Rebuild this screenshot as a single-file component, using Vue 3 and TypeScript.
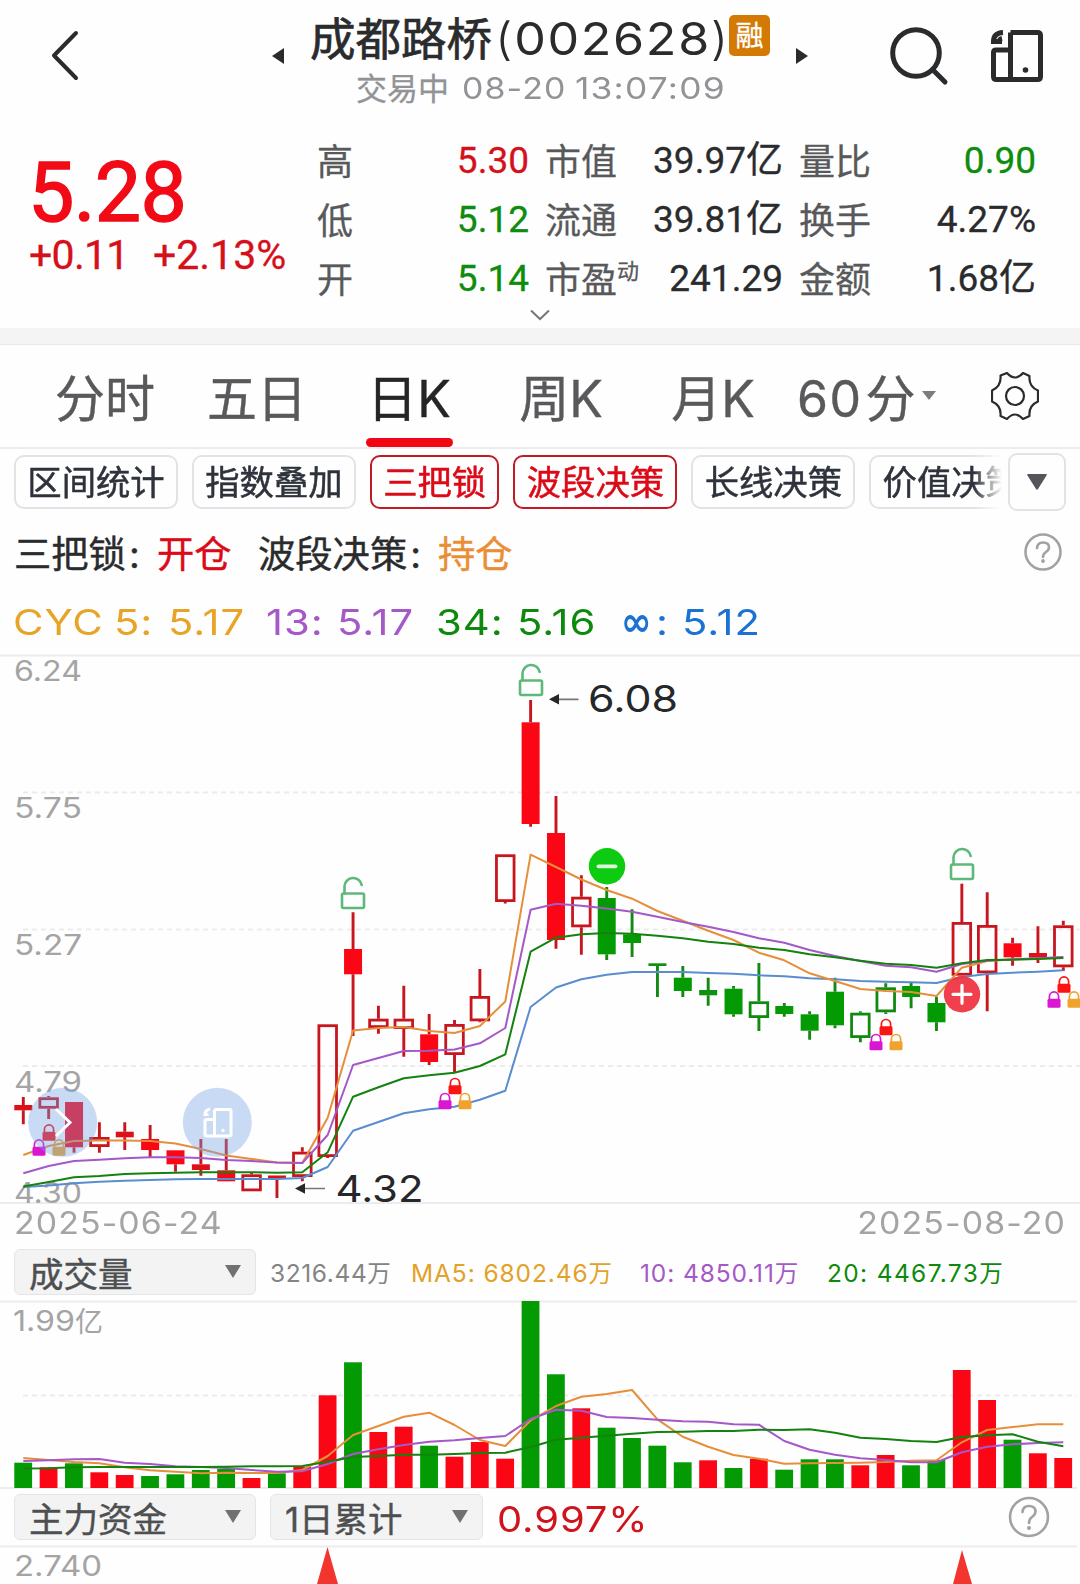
<script setup lang="ts">
interface Candle {
  x: number
  up: boolean
  hollow: boolean
  high: number
  top: number
  bottom: number
  low: number
}
interface Line {
  color: string
  points: string
}

const RED = '#fa0615'
const GREEN = '#039a03'
const DARK_RED = '#c8161e'

const xAt = (i: number): number => 23.3 + 25.366 * i

// colour + style code, high, body top, body bottom, low
const rawCandles: [string, number, number, number, number][] = [
  ['rf', 1097, 1105, 1110.3, 1124.3],
  ['rh', 1096, 1097.3, 1108.7, 1119],
  ['rf', 1102, 1102, 1147.3, 1152.7],
  ['rh', 1122.3, 1137, 1147, 1152.7],
  ['rf', 1122.3, 1131.7, 1137.3, 1150],
  ['rf', 1125, 1139, 1150, 1157],
  ['rf', 1150.3, 1150.3, 1164.3, 1171.7],
  ['rf', 1139, 1164.3, 1170, 1175.7],
  ['rf', 1139, 1170.3, 1181.3, 1181.3],
  ['rh', 1172.7, 1174.3, 1191.3, 1191.3],
  ['rf', 1175.5, 1175.5, 1178, 1198],
  ['rh', 1147.3, 1151.7, 1177, 1181.3],
  ['rh', 1024.3, 1024.3, 1157, 1158],
  ['rf', 912.3, 949, 974.3, 1036],
  ['rh', 1005.7, 1018.7, 1028, 1033.7],
  ['rh', 985.7, 1018.7, 1029, 1056.7],
  ['rf', 1014, 1034.3, 1062, 1065],
  ['rh', 1020, 1024, 1055, 1072.7],
  ['rh', 969, 996, 1021.3, 1022.3],
  ['rh', 854.3, 854.3, 902, 903.5],
  ['rf', 700, 722.3, 824, 826.7],
  ['rf', 796, 833, 940, 948.7],
  ['rh', 875.3, 896.7, 927.3, 954.7],
  ['gf', 887, 898, 954.3, 960],
  ['gf', 909.3, 934.3, 943, 957],
  ['gf', 963.3, 963.3, 966, 997],
  ['gf', 966, 977.7, 991, 997],
  ['gf', 977.7, 990, 995.3, 1005.7],
  ['gf', 986, 988.7, 1014.3, 1016.7],
  ['gh', 963, 1001.3, 1018, 1031],
  ['gf', 1003, 1006, 1014, 1016.7],
  ['gf', 1011.3, 1014.3, 1030.7, 1039.7],
  ['gf', 977.7, 991.7, 1025.3, 1028.3],
  ['gh', 1011.3, 1012.7, 1038, 1042.3],
  ['gh', 983.3, 987.3, 1012.3, 1014],
  ['gf', 983, 986, 997, 1008.3],
  ['gf', 996.7, 1003, 1022.3, 1031],
  ['rh', 883.7, 922, 975.7, 975.7],
  ['rh', 892.3, 925, 973.3, 1011.3],
  ['rf', 937.7, 943.3, 957.3, 965.7],
  ['rf', 926.3, 953, 957.7, 963],
  ['rh', 920.7, 925.3, 967.3, 971],
]
const candles: Candle[] = rawCandles.map(([code, high, top, bottom, low], i) => ({
  x: xAt(i), up: code[0] === 'r', hollow: code[1] === 'h', high, top, bottom, low,
}))

const toLine = (color: string, ys: number[]): Line => ({
  color,
  points: ys.map((y, i) => `${xAt(i).toFixed(1)},${y}`).join(' '),
})

const priceLines: Line[] = [
  toLine('#5a8dcf', [1187, 1185.5, 1183.3, 1181.7, 1180.7, 1180, 1179.3, 1179, 1179, 1179, 1179, 1178, 1167, 1130.7, 1122, 1113.3, 1109.3, 1106.7, 1099.7, 1090.7, 1007, 987.5, 979.3, 974.7, 972, 972, 972, 973, 973.7, 975.3, 976.3, 978.3, 979.3, 981, 981.7, 982.3, 983, 977, 974, 972.7, 971.7, 970.3]),
  toLine('#e68f3a', [1155, 1146, 1141, 1140.5, 1140.5, 1141, 1143.5, 1149, 1155.5, 1159, 1162.5, 1163, 1117.7, 1030.5, 1028, 1027, 1031, 1033, 1026, 1001.5, 854.7, 867, 879.5, 890, 898.7, 911, 920.7, 930.7, 940, 952.7, 960.3, 973.3, 981, 989, 991, 992, 996, 967.7, 961, 959.5, 958.7, 957]),
  toLine('#a558c8', [1173.3, 1166, 1161, 1159.7, 1158.3, 1157.3, 1157.3, 1158, 1160, 1161, 1162.5, 1163, 1135, 1065, 1058, 1051, 1050.7, 1049.5, 1043.3, 1028, 909.7, 903.7, 905.7, 908.5, 911.7, 916.7, 922, 926.7, 932, 938.3, 942.7, 950, 956, 961, 965.7, 967.3, 971.7, 964, 960.7, 959.3, 958.3, 957]),
  toLine('#14820f', [1186.5, 1182, 1177.3, 1176, 1174, 1173.3, 1172.7, 1172.3, 1172.3, 1172.3, 1172.7, 1172.3, 1152.3, 1096.7, 1087.3, 1078.3, 1075.3, 1072.7, 1066, 1054.3, 951.7, 937.7, 934.3, 933, 933.7, 935.7, 938.3, 941.7, 944, 947.7, 950, 954.3, 957.3, 960.7, 963.7, 965, 967.7, 963.3, 960, 959.7, 959, 958]),
]

const VOLUME_BASE = 1488
const volumeColors = 'grgrrggggrgrrgrrgrrrggrggggrgrggg' + 'rrggrrgrr'
const volumeTops = [1462.7, 1467.3, 1463.3, 1472.3, 1475, 1476, 1474.3, 1470, 1469, 1478, 1473.3, 1466.7, 1395.3, 1362.3, 1432, 1426.7, 1445.7, 1456.7, 1442, 1458.7, 1301, 1374.3, 1408.3, 1427.7, 1438, 1445.7, 1462.3, 1460.3, 1468, 1458.7, 1469.7, 1459.3, 1459.3, 1465.3, 1455, 1465.3, 1460, 1370, 1400, 1439.7, 1453.3, 1458]
const bars = volumeTops.map((top, i) => ({
  x: xAt(i), top, color: volumeColors[i] === 'r' ? RED : GREEN,
}))

const volumeLines: Line[] = [
  toLine('#e68f3a', [1458, 1460, 1462, 1463.3, 1467.3, 1470.3, 1471.7, 1473.3, 1472.7, 1473, 1473, 1470, 1456, 1435, 1426, 1416.7, 1412.7, 1425, 1440, 1446, 1420.5, 1406, 1396.7, 1394, 1390, 1419.3, 1436.7, 1446.7, 1455, 1458.7, 1463.7, 1463.3, 1463, 1462.7, 1462, 1460.7, 1460.3, 1442.3, 1430, 1427, 1424.3, 1424.3]),
  toLine('#a558c8', [1461, 1460.3, 1459.3, 1459, 1462.7, 1464, 1466.3, 1467, 1468, 1470, 1471.7, 1471.3, 1464, 1454, 1449.3, 1445, 1441.7, 1440.3, 1438, 1436, 1419, 1409.7, 1410.7, 1417, 1418, 1419.7, 1421.3, 1421.7, 1424.3, 1424.7, 1441, 1449.7, 1454.7, 1458.3, 1460, 1462.3, 1462.3, 1452.3, 1446.7, 1444.3, 1443, 1442.3]),
  toLine('#14820f', [1468.5, 1468.3, 1467.3, 1467, 1467, 1467, 1467, 1467, 1466.7, 1466.3, 1466.3, 1466, 1461.7, 1457, 1456, 1454.7, 1454.7, 1454, 1453, 1452.7, 1447, 1439.7, 1437.7, 1435.7, 1433.7, 1432, 1431.7, 1431, 1431, 1429.7, 1430, 1429.3, 1432.7, 1437.7, 1439, 1441, 1442, 1437, 1435.3, 1434.3, 1441.7, 1446.3]),
]

const axisLabels = [
  { text: '6.24', y: 681 },
  { text: '5.75', y: 817.5 },
  { text: '5.27', y: 954.5 },
  { text: '4.79', y: 1091.5 },
  { text: '4.30', y: 1203 },
]
const openLocks = [
  { x: 353, y: 908 },
  { x: 531, y: 695 },
  { x: 962, y: 879 },
]
const lockGroups = [
  { x: 49, y: 1140.7 },
  { x: 455, y: 1094.3 },
  { x: 886, y: 1035.3 },
  { x: 1064, y: 992.7 },
]
const lockParts = [
  { dx: 0, dy: 0, color: '#fb1414' },
  { dx: -10, dy: 15, color: '#d916d2' },
  { dx: 10, dy: 15, color: '#f0a32c' },
]

const stats = [
  { label: '高', value: '5.30', tone: 'red' },
  { label: '市值', value: '39.97', unit: '亿' },
  { label: '量比', value: '0.90', tone: 'green' },
  { label: '低', value: '5.12', tone: 'green' },
  { label: '流通', value: '39.81', unit: '亿' },
  { label: '换手', value: '4.27%' },
  { label: '开', value: '5.14', tone: 'green' },
  { label: '市盈', sup: '动', value: '241.29' },
  { label: '金额', value: '1.68', unit: '亿' },
]
const tabs = ['分时', '五日', '日K', '周K', '月K']
const chips = [
  { text: '区间统计', on: false },
  { text: '指数叠加', on: false },
  { text: '三把锁', on: true },
  { text: '波段决策', on: true },
  { text: '长线决策', on: false },
  { text: '价值决策', on: false },
]
</script>

<template>
  <main class="app">
    <header class="top">
      <svg class="back" width="30" height="52" viewBox="0 0 30 52"><path d="M26 4L4 26.5L26 49" /></svg>
      <svg class="prev" width="12" height="16" viewBox="0 0 12 16"><path d="M12 0V16L0 8Z" /></svg>
      <div class="heading">
        <h1><span class="name">成都路桥</span><span class="code"><i>(</i>002628<i class="close">)</i></span><span class="badge">融</span></h1>
        <p class="time"><span class="state">交易中</span><span class="day">08-20</span><span class="clock">13:07:09</span></p>
      </div>
      <svg class="next" width="12" height="16" viewBox="0 0 12 16"><path d="M0 0V16L12 8Z" /></svg>
      <svg class="search" width="60" height="60" viewBox="0 0 60 60">
        <circle cx="27" cy="27" r="23.3" /><path d="M43.500 43.500L56 56" />
      </svg>
      <svg class="device" width="52" height="52" viewBox="0 0 52 52">
        <path d="M19.500 2.500H46.500Q49.500 2.500 49.500 5.500V46.500Q49.500 49.500 46.500 49.500H5.500Q2.500 49.500 2.500 46.500V22.500Q2.500 20 5 20H19.500M19.500 2.500V49.500" />
        <path d="M12 2.500Q2.500 3 2.500 11.500H8.500Q8.500 9 11 8.500" /><circle cx="34.500" cy="40" r="2.800" />
      </svg>
    </header>

    <section class="quote">
      <div class="price">
        <strong>5.28</strong>
        <div class="change"><span class="diff">+0.11</span><span>+2.13%</span></div>
      </div>
      <div class="stats">
        <div v-for="s in stats" :key="s.label" class="stat">
          <span class="label">{{ s.label }}<sup v-if="s.sup">{{ s.sup }}</sup></span>
          <span class="value" :class="s.tone">{{ s.value }}<b v-if="s.unit">{{ s.unit }}</b></span>
        </div>
      </div>
      <svg class="expand" width="22" height="12" viewBox="0 0 22 12"><path d="M2 1.500L11 10L20 1.500" /></svg>
    </section>

    <nav class="tabs">
      <span v-for="t in tabs" :key="t" class="tab" :class="{ current: t === '日K' }">{{ t }}</span>
      <span class="tab minutes"><em>60</em><span>分</span><svg width="14" height="9" viewBox="0 0 14 9"><path d="M0 0H14L7 9Z" /></svg></span>
      <svg class="gear" width="48" height="48" viewBox="-24 -24 48 48">
        <path d="M-14.500 -20.500L-8 -23Q-4 -18.500 0 -18.500Q4 -18.500 8 -23L14.500 -20Q13.500 -9.500 23 -5.500V5.500Q13.500 9.500 14.500 20L8 23Q4 18.500 0 18.500Q-4 18.500 -8 23L-14.500 20Q-13.500 9.500 -23 5.500V-5.500Q-13.500 -9.500 -14.500 -20.500Z" />
        <circle r="9" />
      </svg>
    </nav>

    <section class="chips">
      <div class="chip-scroll">
        <span v-for="c in chips" :key="c.text" class="chip" :class="{ on: c.on }">{{ c.text }}</span>
      </div>
      <button class="more"><svg width="20" height="16" viewBox="0 0 20 16"><path d="M1 0H19Q20.500 0 19.500 1.500L11 15Q10 16.500 9 15L0.500 1.500Q-0.500 0 1 0Z" /></svg></button>
    </section>

    <section class="signals">
      <span class="sig-a">三把锁<i>:</i></span><span class="open">开仓</span>
      <span class="sig-b">波段决策<i>:</i></span><span class="hold">持仓</span>
      <svg class="help" width="40" height="40" viewBox="-20 -20 40 40">
        <circle r="17.500" /><path d="M-6 -4Q-5.500 -9.500 0 -9.500Q6 -9.500 6 -4.500Q6 -2 3 0Q0 2 0 5" /><circle class="dot" cy="9" r="1.900" />
      </svg>
    </section>

    <section class="cyc">
      <span class="c1">CYC</span><span class="c2">5:</span><span class="c3">5.17</span>
      <span class="c4">13:</span><span class="c5">5.17</span>
      <span class="c6">34:</span><span class="c7">5.16</span>
      <span class="c8">∞</span><span class="c9">:</span><span class="c10">5.12</span>
    </section>

    <svg class="chart" width="1080" height="550" viewBox="0 654 1080 550">
      <path class="rule" d="M0 655.500H1080M0 1203H1080" />
      <path class="grid" d="M23 792.500H1080M23 929.500H1080M23 1066H1080" />
      <text v-for="a in axisLabels" :key="a.text" class="axis" x="14" :y="a.y" textLength="68" lengthAdjust="spacingAndGlyphs">{{ a.text }}</text>
      <g v-for="c in candles" :key="c.x">
        <path :stroke="c.up ? DARK_RED : '#128a12'" stroke-width="2.900" :d="`M${c.x} ${c.high}V${c.top}M${c.x} ${c.bottom}V${c.low}`" />
        <rect v-if="c.hollow" :x="c.x - 8.800" :y="c.top + 1.400" width="17.600" :height="c.bottom - c.top - 2.800" fill="none" :stroke="c.up ? DARK_RED : '#128a12'" stroke-width="2.800" />
        <rect v-else :x="c.x - 9" :y="c.top" width="18" :height="c.bottom - c.top" :fill="c.bottom - c.top < 6 ? (c.up ? '#de1019' : '#109010') : (c.up ? RED : GREEN)" />
      </g>
      <polyline v-for="l in priceLines" :key="l.color" class="ma" :points="l.points" :stroke="l.color" />

      <g v-for="o in openLocks" :key="o.x" class="open-lock" :transform="`translate(${o.x} ${o.y})`">
        <rect x="-11" y="-14.500" width="22" height="14.500" rx="1.500" /><path d="M-8.500 -14.500V-22A8.700 8.700 0 0 1 8.700 -23" />
      </g>
      <g v-for="g in lockGroups" :key="g.x" :transform="`translate(${g.x} ${g.y})`">
        <g v-for="p in lockParts" :key="p.color" :transform="`translate(${p.dx} ${p.dy})`">
          <rect x="-6.500" y="-9" width="13" height="9" rx="1.500" :fill="p.color" />
          <path d="M-4.600 -8V-11A4.600 4.800 0 0 1 4.600 -11V-8" fill="none" :stroke="p.color" stroke-width="1.700" />
        </g>
      </g>

      <circle cx="607" cy="866.300" r="18.200" fill="#0ccb10" />
      <path d="M598.500 866.300H615.500" stroke="#dcfbdc" stroke-width="3.800" stroke-linecap="round" />
      <circle cx="962" cy="994.300" r="18.200" fill="#ef3040" fill-opacity=".93" />
      <path d="M953 994.300H971M962 985.300V1003.300" stroke="#fff" stroke-width="3.200" stroke-linecap="round" />

      <path d="M558 699.300H578.500M304 1188.500H325" stroke="#777" stroke-width="1.700" />
      <path d="M549 699.300L559 694V704.600ZM295 1188.500L305 1183.200V1193.800Z" fill="#262729" />
      <text class="peak" x="588" y="712" textLength="90" lengthAdjust="spacingAndGlyphs">6.08</text>
      <text class="peak" x="335.500" y="1201.500" textLength="88" lengthAdjust="spacingAndGlyphs">4.32</text>

      <circle cx="62.700" cy="1122.300" r="34.500" class="float" />
      <circle cx="217.300" cy="1122.300" r="34.500" class="float" />
      <path d="M56 1109L70 1122.500L56 1136" class="float-icon" />
      <path d="M214.500 1109.500H229.500Q231 1109.500 231 1111V1134.500Q231 1136 229.500 1136H206.500Q205 1136 205 1134.500V1121Q205 1119.500 206.500 1119.500H214.500M214.500 1109.500V1136M210 1109Q205 1110 205 1114.500H208.500" class="float-icon" />
      <circle cx="223" cy="1130.500" r="1.700" fill="#fff" />
    </svg>

    <div class="dates"><span>2025-06-24</span><span>2025-08-20</span></div>

    <section class="volume-head">
      <div class="select wide"><span>成交量</span><svg width="16" height="13" viewBox="0 0 16 13"><path d="M0 0H16L8 13Z" /></svg></div>
      <span class="v1">3216.44<b>万</b></span>
      <span class="v2">MA5: 6802.46<b>万</b></span>
      <span class="v3">10: 4850.11<b>万</b></span>
      <span class="v4">20: 4467.73<b>万</b></span>
    </section>

    <svg class="volume" width="1080" height="189" viewBox="0 1300 1080 189">
      <path class="rule" d="M0 1301.500H1077M0 1488H1077" />
      <path class="grid" d="M23 1395.500H1077" />
      <text class="axis" x="13" y="1330.500" textLength="62" lengthAdjust="spacingAndGlyphs">1.99</text>
      <text class="axis cjk" x="75" y="1331.500">亿</text>
      <rect v-for="b in bars" :key="b.x" :x="b.x - 9" :y="b.top" width="17.800" :height="VOLUME_BASE - b.top" :fill="b.color" />
      <polyline v-for="l in volumeLines" :key="l.color" class="ma" :points="l.points" :stroke="l.color" />
    </svg>

    <section class="fund-head">
      <div class="select wide"><span>主力资金</span><svg width="16" height="13" viewBox="0 0 16 13"><path d="M0 0H16L8 13Z" /></svg></div>
      <div class="select narrow"><span>1日累计</span><svg width="16" height="13" viewBox="0 0 16 13"><path d="M0 0H16L8 13Z" /></svg></div>
      <span class="ratio">0.997%</span>
      <svg class="help" width="42" height="42" viewBox="-21 -21 42 42">
        <circle r="19" /><path d="M-6.500 -5Q-6 -11 0 -11Q6.500 -11 6.500 -5.500Q6.500 -2.500 3 0Q0 2 0 6" /><circle class="dot" cy="11" r="2" />
      </svg>
    </section>

    <svg class="fund" width="1080" height="39" viewBox="0 1545 1080 39">
      <path class="rule" d="M0 1546.500H1077" />
      <text class="axis" x="14" y="1575.500" textLength="88" lengthAdjust="spacingAndGlyphs">2.740</text>
      <path d="M327.500 1547L338 1584H317ZM962 1550L972 1584H953Z" fill="#f2362f" />
    </svg>
  </main>
</template>

<style>
body {
  margin: 0;
  background: #fff;
}
</style>

<style scoped>
.app {
  width: 1080px;
  height: 1584px;
  overflow: hidden;
  display: flex;
  flex-direction: column;
  background: #fefefe;
  color: #2a2b2d;
  font-family: Inter, "Noto Sans CJK SC", sans-serif;
}
.app > * { flex: none; box-sizing: border-box; }
svg { display: block; flex: none; }
i, em { font-style: normal; }
b { font-weight: 400; }

.top {
  height: 113px;
  display: flex;
  align-items: flex-start;
}
.back { margin: 29px 0 0 50px; fill: none; stroke: #2a2b2d; stroke-width: 4; stroke-linecap: round; stroke-linejoin: round; }
.prev { margin: 48px 0 0 192px; fill: #2a2b2d; }
.heading { width: 472px; margin-left: 26px; flex: none; }
h1 { margin: 0; height: 70px; display: flex; align-items: flex-start; font-weight: 400; }
.name { width: 182px; font-size: 45.500px; line-height: 70px; margin-top: 5px; -webkit-text-stroke: .7px #2a2b2d; }
.code { width: 233px; margin-left: 3px; font-size: 45px; line-height: 70px; letter-spacing: 1.500px; margin-top: 4px; white-space: nowrap; transform: scaleX(1.115); transform-origin: 0 50%; }
.code i { font-weight: 300; }
.badge { width: 41px; height: 41px; margin: 15px 0 0 1px; border-radius: 5px; background: #d37a05; color: #fff; font-size: 28px; line-height: 43px; text-align: center; position: relative; -webkit-text-stroke: .3px #fff; }
.time { display: flex; margin: 0; padding-left: 46px; height: 36px; font-size: 30px; line-height: 36px; color: #919396; letter-spacing: 1px; }
.state { width: 106px; font-size: 31px; letter-spacing: 0; margin-top: 1px; -webkit-text-stroke: .3px currentColor; }
.day { width: 113px; transform: scaleX(1.13); transform-origin: 0 50%; }
.clock { transform: scaleX(1.18); transform-origin: 0 50%; }
.next { margin: 48px 0 0 14px; fill: #2a2b2d; }
.search { margin: 26px 0 0 81px; fill: none; stroke: #2a2b2d; stroke-width: 5; stroke-linecap: round; }
.device { margin: 30px 0 0 42px; fill: none; stroke: #2a2b2d; stroke-width: 5; }
.device circle { fill: #2a2b2d; stroke: none; }

.quote { position: relative; height: 215px; display: flex; font-family: Roboto, "Noto Sans CJK SC", sans-serif; }
.price { width: 317px; padding-left: 28px; box-sizing: border-box; color: #f20a17; white-space: nowrap; }
.price strong { display: block; margin-top: 40px; font-size: 82.500px; line-height: 80px; font-weight: 400; letter-spacing: -.7px; -webkit-text-stroke: 1.400px currentColor; }
.change { display: flex; font-size: 41px; line-height: 48px; margin-top: -2px; margin-left: 1px; color: #d5101b; -webkit-text-stroke: .3px currentColor; }
.diff { width: 124px; letter-spacing: -.7px; }
.stats { display: grid; grid-template-columns: 212px 238px 237px; column-gap: 16px; grid-auto-rows: 59px; margin-top: 18px; }
.stat { display: flex; justify-content: space-between; align-items: center; font-size: 37px; line-height: 59px; }
.label { font-size: 36px; color: #58595b; white-space: nowrap; padding-top: 6px; line-height: 53px; -webkit-text-stroke: .3px currentColor; }
.label sup { font-size: 22px; line-height: 1; vertical-align: 14px; }
.value { white-space: nowrap; -webkit-text-stroke: .3px currentColor; }
.value b { font-size: 37px; }
.red { color: #d5101b; }
.green { color: #0d8c0d; }
.expand { position: absolute; left: 529px; top: 196px; fill: none; stroke: #777; stroke-width: 2; }

.tabs { height: 121px; border-top: 16px solid #f4f4f4; border-bottom: 2px solid #ececec; box-shadow: inset 0 1px #e9e9e9; display: flex; align-items: center; font-size: 50px; color: #58595b; }
.tab { position: relative; width: 152px; height: 103px; line-height: 111px; text-align: center; white-space: nowrap; -webkit-text-stroke: .4px currentColor; }
.tab:first-child { margin-left: 29px; }
.tab.current { color: #242527; }
.tab.current::after { content: ""; position: absolute; left: 33px; bottom: 0; width: 87px; height: 9px; border-radius: 5px; background: #f30613; }
.tab.minutes { width: 142px; margin-left: 8px; display: flex; align-items: center; }
.minutes em { letter-spacing: 1.500px; margin: 7px 3px 0 0; }
.minutes span { margin-top: 7px; }
.minutes svg { margin-left: 6px; fill: #7c7c7e; }
.gear { margin-left: 52px; fill: none; stroke: #2a2b2d; stroke-width: 2.200; stroke-linejoin: round; }

.chips { height: 67px; display: flex; padding-left: 14px; }
.chip-scroll { width: 988px; display: flex; gap: 14px; padding-top: 6px; overflow: hidden; -webkit-mask-image: linear-gradient(90deg, #000 960px, transparent 988px); mask-image: linear-gradient(90deg, #000 960px, transparent 988px); }
.chip { flex: none; height: 54px; box-sizing: border-box; padding: 2px 11.300px 0; border: 2px solid #e2e3e4; border-radius: 10px; font-size: 34.350px; line-height: 47px; color: #2e323b; white-space: nowrap; -webkit-text-stroke: .5px currentColor; }
.chip.on { border-color: #c11a22; color: #dc0a18; }
.more { width: 58px; height: 58px; margin: 4px 0 0 6px; padding: 0; border: 2px solid #e2e3e4; border-radius: 9px; background: #fefefe; display: grid; place-items: center; }
.more svg { fill: #54565c; }

.signals { height: 71px; display: flex; align-items: center; padding-left: 14px; font-size: 37.300px; line-height: 65px; -webkit-text-stroke: .4px currentColor; }
.signals span { padding-top: 6px; }
.sig-a { width: 143px; }
.sig-b { width: 180px; white-space: nowrap; }
.signals i { margin-left: 3px; }
.open { width: 101px; color: #dc0a18; }
.hold { color: #ea8e35; }
.help { fill: none; stroke: #a2a2a3; stroke-width: 2.600; stroke-linecap: round; }
.help .dot { fill: #a2a2a3; stroke: none; }
.signals .help { margin-left: auto; margin-right: 17px; }

.cyc { height: 67px; display: flex; align-items: center; padding: 3px 0 0 13px; font-size: 36px; line-height: 64px; letter-spacing: .8px; white-space: nowrap; }
.cyc span { transform: scaleX(1.16); transform-origin: 0 50%; }
.c1, .c2, .c3 { color: #e8a427; }
.c4, .c5 { color: #a558c8; }
.c6, .c7 { color: #0d8a0d; }
.c8, .c9, .c10 { color: #1b72d2; }
.c1 { width: 101px; }
.c2 { width: 54px; }
.c3 { width: 98px; }
.c4 { width: 71px; }
.c5 { width: 99px; }
.c6 { width: 81px; }
.c7 { width: 106px; }
.cyc .c8 { width: 33px; font-size: 34px; font-weight: 500; transform: scale(.82, 1.2); }
.c9 { width: 26px; }

.rule { stroke: #ececec; stroke-width: 2; }
.grid { stroke: #ececec; stroke-width: 1.800; stroke-dasharray: 5 4; }
.axis { font-size: 28px; fill: #a4a4a5; }
.cjk { font-size: 28px; }
.peak { font-size: 37px; fill: #262729; }
.ma { fill: none; stroke-width: 2; stroke-linejoin: round; }
.open-lock { fill: none; stroke: #5cb97a; stroke-width: 2.600; stroke-linecap: round; }
.float { fill: #73a0e6; fill-opacity: .38; }
.float-icon { fill: none; stroke: #fff; stroke-width: 3; }

.dates { height: 39px; display: flex; justify-content: space-between; padding: 0 14px; font-size: 30.500px; line-height: 37px; color: #a4a4a5; letter-spacing: 1px; }
.dates span { transform: scaleX(1.11); transform-origin: 0 50%; }
.dates span:last-child { transform-origin: 100% 50%; }
.volume-head { height: 57px; display: flex; align-items: flex-start; padding: 6px 0 0 14px; font-size: 24.500px; line-height: 49px; letter-spacing: .9px; white-space: nowrap; }
.volume-head b { font-size: 23.500px; }
.select { height: 46px; box-sizing: border-box; border: 1.500px solid #e5e5e6; border-radius: 6px; background: #f3f3f3; display: flex; align-items: center; justify-content: space-between; padding: 0 14px; font-size: 34.500px; line-height: 42px; letter-spacing: 0; color: #4e4f51; -webkit-text-stroke: .4px currentColor; }
.select span { padding-top: 6px; }
.select svg { fill: #707173; margin-top: -1px; }
.wide { width: 242px; margin-right: 14px; }
.narrow { width: 213px; }
.v1 { width: 141px; color: #838485; letter-spacing: .6px; }
.v2 { width: 229px; color: #e2a127; }
.v3 { width: 187px; color: #a558c8; }
.v4 { color: #0d8a0d; letter-spacing: 1.350px; }

.fund-head { height: 56px; display: flex; align-items: flex-start; padding: 5px 0 0 14px; }
.ratio { margin-left: 14px; font-size: 36px; line-height: 51px; letter-spacing: .8px; color: #cf141e; transform: scaleX(1.11); transform-origin: 0 50%; }
.fund-head .help { margin: 2px 30px 0 auto; }
</style>
